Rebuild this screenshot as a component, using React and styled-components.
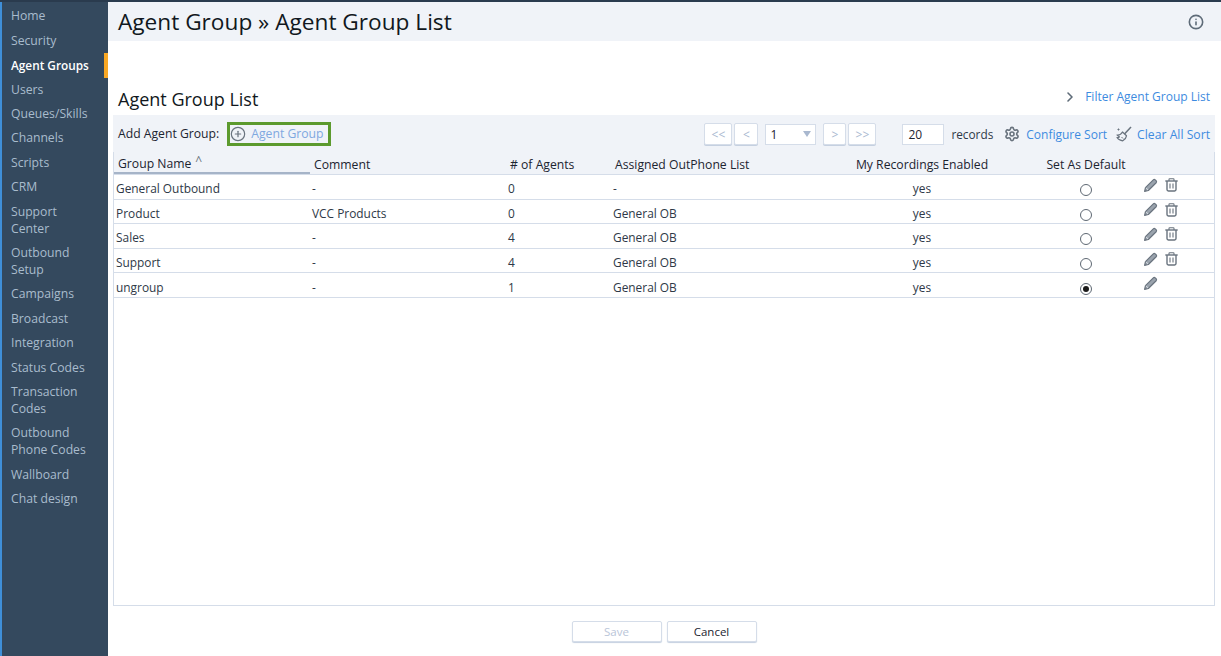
import React from 'react';
import styled, { createGlobalStyle } from 'styled-components';
import { ChevronRight, CirclePlus, Info, Settings } from 'lucide-react';

const GlobalStyle = createGlobalStyle`
  html, body {
    margin: 0;
    padding: 0;
    height: 100%;
    overflow: hidden;
    background: #fff;
  }
  body {
    font-family: "Open Sans", "Noto Sans", sans-serif;
    color: #1c2430;
  }
  #root { height: 100%; }
  * { box-sizing: border-box; }
`;

const Page = styled.div`
  height: 656px;
  display: flex;
  flex-direction: column;
`;

const TopStrip = styled.div`
  height: 2px;
  flex: none;
  background: #2a3b4e;
`;

const Body = styled.div`
  flex: 1;
  display: flex;
  min-height: 0;
`;

const Sidebar = styled.nav`
  width: 108px;
  flex: none;
  padding-top: 2.4px;
  background: #34495e;
  border-left: 2px solid #3f8fd8;
`;

const NavItem = styled.a`
  display: block;
  padding: 3.84px 10px 3.84px 9px;
  font-size: ${p => (p.$active ? 11.8 : 12.2)}px;
  line-height: 16.8px;
  color: ${p => (p.$active ? '#ffffff' : '#a9bccd')};
  font-weight: ${p => (p.$active ? 600 : 400)};
  border-right: 4px solid ${p => (p.$active ? '#f9a825' : 'transparent')};
`;

const Main = styled.main`
  flex: 1;
  min-width: 0;
  display: flex;
  flex-direction: column;
`;

const TitleBar = styled.header`
  height: 39px;
  flex: none;
  display: flex;
  align-items: center;
  justify-content: space-between;
  padding: 0 17px 0 10px;
  background: #f0f3f8;
`;

const Title = styled.h1`
  margin: 0;
  font-size: 22.65px;
  font-weight: 400;
  color: #111820;
`;

const InfoIcon = styled(Info)`
  width: 16px;
  height: 16px;
  color: #5e6b78;
  stroke-width: 2.4;
`;

const Section = styled.section`
  flex: 1;
  min-height: 0;
  display: flex;
  flex-direction: column;
  padding: 0 6px 0 5px;
`;

const SectionHead = styled.div`
  height: 74px;
  flex: none;
  display: flex;
  align-items: flex-end;
  justify-content: space-between;
  padding: 0 5px 4px 5px;
`;

const SectionTitle = styled.h2`
  margin: 0;
  font-size: 18px;
  line-height: 24px;
  font-weight: 400;
  color: #111820;
`;

const FilterLink = styled.a`
  display: flex;
  align-items: center;
  gap: 7px;
  margin-bottom: 6px;
  font-size: 12px;
  color: #3d8be0;
`;

const Toolbar = styled.div`
  height: 37px;
  flex: none;
  display: flex;
  align-items: center;
  padding: 0 5px;
  background: #f0f3f8;
`;

const AddLabel = styled.span`
  font-size: 12.2px;
  color: #1c2430;
  margin-right: 8px;
`;

const AddButton = styled.a`
  width: 104px;
  height: 24px;
  display: flex;
  align-items: center;
  gap: 5px;
  border: 3px solid #5c9a2e;
  font-size: 12.2px;
  color: #7fa8e0;
  svg { color: #69737e; }
`;

const Pager = styled.div`
  margin-left: auto;
  padding-top: 1px;
  display: flex;
  align-items: center;
`;

const PageButton = styled.button`
  width: ${p => p.$width}px;
  height: 22px;
  margin-right: ${p => p.$gap}px;
  padding: 0;
  font: inherit;
  font-size: 12px;
  color: #a9b8cf;
  background: #fff;
  border: 1px solid #d5dde9;
  border-radius: 2px;
  box-shadow: 0 1px 0 #c5d0e0;
`;

const PageSelect = styled.div`
  width: 51px;
  height: 21px;
  margin-right: 7px;
  display: flex;
  align-items: center;
  justify-content: space-between;
  padding: 0 4px 0 4px;
  background: #fff;
  border: 1px solid #d5dde9;
  font-size: 12px;
  color: #1c2430;
`;

const Caret = styled.span`
  width: 0;
  height: 0;
  border-left: 4px solid transparent;
  border-right: 4px solid transparent;
  border-top: 6px solid #a9b8cf;
`;

const RecordsInput = styled.div`
  width: 42px;
  height: 21px;
  margin-left: 26px;
  padding-left: 5px;
  display: flex;
  align-items: center;
  background: #fff;
  border: 1px solid #d5dde9;
  font-size: 12px;
`;

const RecordsLabel = styled.span`
  margin: 0 11px 0 7px;
  font-size: 11.8px;
  color: #2e3947;
`;

const ToolLink = styled.a`
  display: flex;
  align-items: center;
  gap: ${p => p.$gap}px;
  margin-right: ${p => p.$end}px;
  font-size: ${p => p.$size}px;
  color: #3d8be0;
  svg { color: #69737e; flex: none; }
`;

const Table = styled.div`
  flex: 1;
  min-height: 0;
  border: 1px solid #d5dde9;
  border-top: 0;
`;

const columns = '196px 196px 105px 203px 216px 112px 1fr';

const HeadRow = styled.div`
  height: 23px;
  display: grid;
  grid-template-columns: ${columns};
  align-items: center;
  background: #f0f3f8;
  border-bottom: 1px solid #d5dde9;
`;

const HeadCell = styled.div`
  height: 100%;
  display: flex;
  align-items: center;
  justify-content: ${p => (p.$center ? 'center' : 'flex-start')};
  padding: 2px 0 0 ${p => (p.$center ? 0 : 4)}px;
  font-size: 12.2px;
  font-weight: 500;
  color: #1c2430;
  border-bottom: ${p => (p.$sorted ? '2px solid #a6b4c8' : 0)};
`;

const SortMark = styled.span`
  margin: -6px 0 0 4px;
  font-size: 12px;
  font-weight: 400;
  color: #69737e;
`;

const Row = styled.div`
  height: 24.6px;
  display: grid;
  grid-template-columns: ${columns};
  align-items: center;
  border-bottom: 1px solid #d5dde9;
`;

const Cell = styled.div`
  padding: 3px 0 0 ${p => (p.$center ? 0 : 2)}px;
  text-align: ${p => (p.$center ? 'center' : 'left')};
  font-size: 11.9px;
  color: #2e3947;
`;

const Radio = styled.span`
  display: inline-flex;
  align-items: center;
  justify-content: center;
  width: 12px;
  height: 12px;
  border: 1px solid #5e6873;
  border-radius: 50%;
  background: #fff;
  &::after {
    content: '';
    width: 6px;
    height: 6px;
    border-radius: 50%;
    background: ${p => (p.$checked ? '#1a1a1a' : 'transparent')};
  }
`;

const Actions = styled.div`
  display: flex;
  align-items: center;
  gap: 7px;
  padding: 0 0 3px 1px;
  svg { color: #69737e; display: block; }
`;

const Footer = styled.footer`
  height: 50px;
  flex: none;
  display: flex;
  justify-content: center;
  align-items: flex-start;
  gap: 5px;
  padding: 15px 0 0 0;
`;

const FooterButton = styled.button`
  width: 90px;
  height: 21px;
  padding: 0;
  font: inherit;
  font-size: 11.5px;
  font-weight: 500;
  color: ${p => (p.disabled ? '#b9c5d8' : '#1c2430')};
  background: #fff;
  border: 1px solid #d5dde9;
  border-radius: 2px;
  box-shadow: 0 1px 1px #c5d0e0;
`;

const PencilIcon = () => (
  <svg width="15" height="15" viewBox="0 0 14 14" fill="none">
    <path d="M1.5 12.5 L2.3 9 L9.6 1.7 Q10.5 0.9 11.4 1.7 L12.3 2.6 Q13.1 3.5 12.3 4.4 L5 11.7 Z" fill="#9aa3ad" stroke="currentColor" strokeWidth="1.1" strokeLinejoin="round" />
    <path d="M2.8 9.2 L4.8 11.2" stroke="#e4e8ec" strokeWidth="0.8" />
  </svg>
);

const TrashIcon = () => (
  <svg width="13" height="14" viewBox="0 0 13 14" fill="none" stroke="currentColor" strokeWidth="1.4">
    <path d="M0.3 3 H12.7" />
    <path d="M4 3 V1.4 Q4 0.8 4.6 0.8 H8.4 Q9 0.8 9 1.4 V3" strokeWidth="1.1" />
    <path d="M2 3 V11.6 Q2 13 3.4 13 H9.6 Q11 13 11 11.6 V3" />
    <path d="M5 5.5 V10.5 M8 5.5 V10.5" strokeWidth="1.1" />
  </svg>
);

const BroomIcon = () => (
  <svg width="16" height="16" viewBox="0 0 16 16" fill="none" stroke="currentColor" strokeWidth="1.2" strokeLinejoin="round">
    <path d="M15 1 L8.5 8" strokeWidth="1.5" />
    <path d="M6.5 6 L10.5 9.8 Q10 13 6.8 14.8 Q3 14.5 1 11.5 Q2.5 11.8 3.5 10.8 Q2.2 10.5 1 9 Q4.6 9.4 6.5 6 Z" />
    <path d="M1.5 3.5 H3.5 M2.5 2.5 V4.5" strokeWidth="1" />
    <path d="M5.5 11 L7 12.5" strokeWidth="1" />
  </svg>
);

const navItems = [
  'Home', 'Security', 'Agent Groups', 'Users', 'Queues/Skills', 'Channels', 'Scripts', 'CRM',
  'Support Center', 'Outbound Setup', 'Campaigns', 'Broadcast', 'Integration', 'Status Codes',
  'Transaction Codes', 'Outbound Phone Codes', 'Wallboard', 'Chat design',
];

const rows = [
  { name: 'General Outbound', comment: '-', agents: 0, list: '-' },
  { name: 'Product', comment: 'VCC Products', agents: 0, list: 'General OB' },
  { name: 'Sales', comment: '-', agents: 4, list: 'General OB' },
  { name: 'Support', comment: '-', agents: 4, list: 'General OB' },
  { name: 'ungroup', comment: '-', agents: 1, list: 'General OB', isDefault: true },
];

export default function App() {
  return (
    <Page>
      <GlobalStyle />
      <TopStrip />
      <Body>
        <Sidebar>
          {navItems.map(item => (
            <NavItem key={item} $active={item === 'Agent Groups'}>{item}</NavItem>
          ))}
        </Sidebar>
        <Main>
          <TitleBar>
            <Title>Agent Group » Agent Group List</Title>
            <InfoIcon />
          </TitleBar>
          <Section>
            <SectionHead>
              <SectionTitle>Agent Group List</SectionTitle>
              <FilterLink><ChevronRight size={16} strokeWidth={2.4} color="#5e6b78" />Filter Agent Group List</FilterLink>
            </SectionHead>
            <Toolbar>
              <AddLabel>Add Agent Group:</AddLabel>
              <AddButton><CirclePlus size={16} strokeWidth={1.8} />Agent Group</AddButton>
              <Pager>
                <PageButton $width={28} $gap={2}>&lt;&lt;</PageButton>
                <PageButton $width={24} $gap={7}>&lt;</PageButton>
                <PageSelect>1<Caret /></PageSelect>
                <PageButton $width={23} $gap={2}>&gt;</PageButton>
                <PageButton $width={28} $gap={0}>&gt;&gt;</PageButton>
                <RecordsInput>20</RecordsInput>
                <RecordsLabel>records</RecordsLabel>
                <ToolLink $gap={6} $end={9} $size={12}><Settings size={16} strokeWidth={2.4} />Configure Sort</ToolLink>
                <ToolLink $gap={5} $end={0} $size={12.2}><BroomIcon />Clear All Sort</ToolLink>
              </Pager>
            </Toolbar>
            <Table>
              <HeadRow>
                <HeadCell $sorted>Group Name<SortMark>^</SortMark></HeadCell>
                <HeadCell>Comment</HeadCell>
                <HeadCell># of Agents</HeadCell>
                <HeadCell>Assigned OutPhone List</HeadCell>
                <HeadCell $center>My Recordings Enabled</HeadCell>
                <HeadCell $center>Set As Default</HeadCell>
                <HeadCell />
              </HeadRow>
              {rows.map(row => (
                <Row key={row.name}>
                  <Cell>{row.name}</Cell>
                  <Cell>{row.comment}</Cell>
                  <Cell>{row.agents}</Cell>
                  <Cell>{row.list}</Cell>
                  <Cell $center>yes</Cell>
                  <Cell $center><Radio $checked={row.isDefault} /></Cell>
                  <Actions>
                    <PencilIcon />
                    {!row.isDefault && <TrashIcon />}
                  </Actions>
                </Row>
              ))}
            </Table>
            <Footer>
              <FooterButton disabled>Save</FooterButton>
              <FooterButton>Cancel</FooterButton>
            </Footer>
          </Section>
        </Main>
      </Body>
    </Page>
  );
}
